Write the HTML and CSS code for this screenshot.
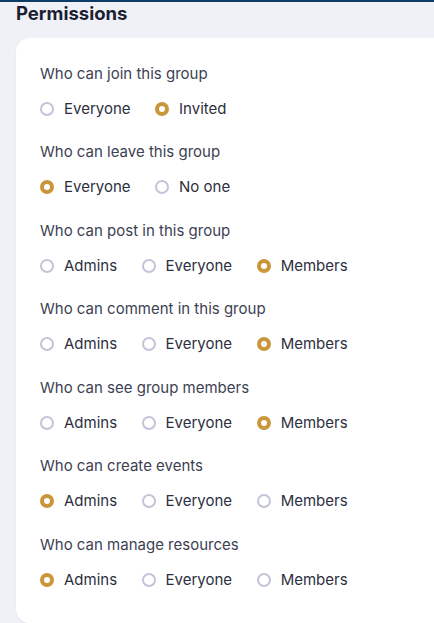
FILE: index.html
```html
<!DOCTYPE html>
<html lang="en">
<head>
<meta charset="utf-8">
<title>Permissions</title>
<link rel="stylesheet" href="styles.css">
</head>
<body>
<div class="topbar"></div>
<main class="page">
  <h2 class="title">Permissions</h2>
  <section class="card">
    <div class="group">
      <div class="question">Who can join this group</div>
      <div class="options">
        <label class="opt"><span class="radio"></span>Everyone</label>
        <label class="opt"><span class="radio on"></span>Invited</label>
      </div>
    </div>
    <div class="group">
      <div class="question">Who can leave this group</div>
      <div class="options">
        <label class="opt"><span class="radio on"></span>Everyone</label>
        <label class="opt"><span class="radio"></span>No one</label>
      </div>
    </div>
    <div class="group">
      <div class="question">Who can post in this group</div>
      <div class="options">
        <label class="opt"><span class="radio"></span>Admins</label>
        <label class="opt"><span class="radio"></span>Everyone</label>
        <label class="opt"><span class="radio on"></span>Members</label>
      </div>
    </div>
    <div class="group">
      <div class="question">Who can comment in this group</div>
      <div class="options">
        <label class="opt"><span class="radio"></span>Admins</label>
        <label class="opt"><span class="radio"></span>Everyone</label>
        <label class="opt"><span class="radio on"></span>Members</label>
      </div>
    </div>
    <div class="group">
      <div class="question">Who can see group members</div>
      <div class="options">
        <label class="opt"><span class="radio"></span>Admins</label>
        <label class="opt"><span class="radio"></span>Everyone</label>
        <label class="opt"><span class="radio on"></span>Members</label>
      </div>
    </div>
    <div class="group">
      <div class="question">Who can create events</div>
      <div class="options">
        <label class="opt"><span class="radio on"></span>Admins</label>
        <label class="opt"><span class="radio"></span>Everyone</label>
        <label class="opt"><span class="radio"></span>Members</label>
      </div>
    </div>
    <div class="group">
      <div class="question">Who can manage resources</div>
      <div class="options">
        <label class="opt"><span class="radio on"></span>Admins</label>
        <label class="opt"><span class="radio"></span>Everyone</label>
        <label class="opt"><span class="radio"></span>Members</label>
      </div>
    </div>
  </section>
</main>
</body>
</html>
```
FILE: styles.css
```css
html, body {
  margin: 0;
  padding: 0;
}
body {
  background: #f0f1f7;
  font-family: Inter, Roboto, "Liberation Sans", sans-serif;
  color: #2d2f40;
  width: 434px;
  height: 623px;
  overflow: hidden;
}
.topbar {
  height: 2px;
  background: #0d3d66;
}
.page {
  padding: 0 0 0 16px;
}
.title {
  margin: 0;
  font-family: Inter, Roboto, sans-serif;
  font-size: 18.5px;
  font-weight: 700;
  line-height: 22px;
  color: #1c1f33;
  height: 36px;
}
.card {
  background: #ffffff;
  border-radius: 14px 0 0 14px;
  padding: 25.5px 24px 33px 24px;
  box-shadow: 0 1px 2px rgba(30, 35, 70, 0.06);
}
.group + .group {
  margin-top: 23.5px;
}
.question {
  font-size: 15px;
  line-height: 20px;
  color: #3d3f52;
  margin-bottom: 15px;
}
.options {
  display: flex;
  gap: 24.5px;
  height: 20px;
  align-items: center;
}
.opt {
  display: flex;
  align-items: center;
  gap: 10px;
  font-size: 15px;
  line-height: 20px;
  color: #2d2f40;
}
.radio {
  box-sizing: border-box;
  width: 14px;
  height: 14px;
  border-radius: 50%;
  border: 2px solid #c2c4d7;
  background: #fff;
}
.radio.on {
  border: 4.5px solid #c9963a;
  background: #fff;
}
```
